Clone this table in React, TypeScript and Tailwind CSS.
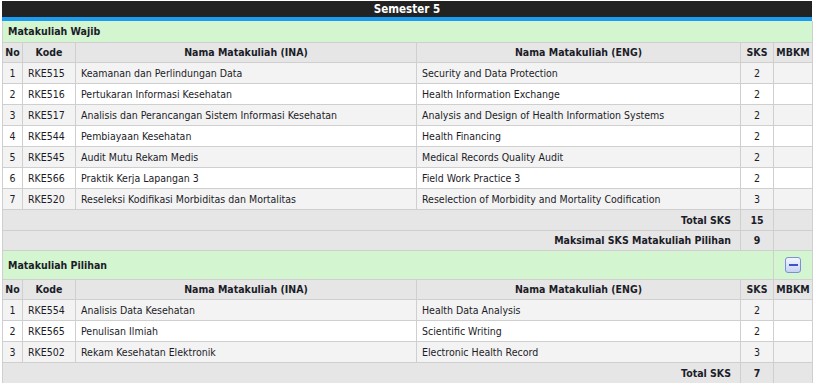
import React from 'react';

type Course = { kode: string; ina: string; eng: string; sks: number };

const wajib: Course[] = [
  { kode: 'RKE515', ina: 'Keamanan dan Perlindungan Data', eng: 'Security and Data Protection', sks: 2 },
  { kode: 'RKE516', ina: 'Pertukaran Informasi Kesehatan', eng: 'Health Information Exchange', sks: 2 },
  { kode: 'RKE517', ina: 'Analisis dan Perancangan Sistem Informasi Kesehatan', eng: 'Analysis and Design of Health Information Systems', sks: 2 },
  { kode: 'RKE544', ina: 'Pembiayaan Kesehatan', eng: 'Health Financing', sks: 2 },
  { kode: 'RKE545', ina: 'Audit Mutu Rekam Medis', eng: 'Medical Records Quality Audit', sks: 2 },
  { kode: 'RKE566', ina: 'Praktik Kerja Lapangan 3', eng: 'Field Work Practice 3', sks: 2 },
  { kode: 'RKE520', ina: 'Reseleksi Kodifikasi Morbiditas dan Mortalitas', eng: 'Reselection of Morbidity and Mortality Codification', sks: 3 },
];

const pilihan: Course[] = [
  { kode: 'RKE554', ina: 'Analisis Data Kesehatan', eng: 'Health Data Analysis', sks: 2 },
  { kode: 'RKE565', ina: 'Penulisan Ilmiah', eng: 'Scientific Writing', sks: 2 },
  { kode: 'RKE502', ina: 'Rekam Kesehatan Elektronik', eng: 'Electronic Health Record', sks: 3 },
];

const cell = 'border border-[#cfcfcf] px-[5px] pt-[2px] pb-0';

function HeaderRow() {
  return (
    <tr className="h-[20px] bg-[#e6e6e6] font-bold">
      <td className={`${cell} !px-0 text-center`}>No</td>
      <td className={`${cell} text-center`}>Kode</td>
      <td className={`${cell} text-center`}>Nama Matakuliah (INA)</td>
      <td className={`${cell} text-center`}>Nama Matakuliah (ENG)</td>
      <td className={`${cell} !px-0 text-center`}>SKS</td>
      <td className={`${cell} !px-0 text-center`}>MBKM</td>
    </tr>
  );
}

function CourseRows({ items }: { items: Course[] }) {
  return (
    <>
      {items.map((c, i) => (
        <tr key={c.kode} className={`h-[21px] ${i % 2 === 0 ? 'bg-[#f3f3f3]' : 'bg-white'}`}>
          <td className={`${cell} !px-0 text-center`}>{i + 1}</td>
          <td className={cell}>{c.kode}</td>
          <td className={cell}>{c.ina}</td>
          <td className={cell}>{c.eng}</td>
          <td className={`${cell} text-center`}>{c.sks}</td>
          <td className={cell}></td>
        </tr>
      ))}
    </>
  );
}

function SummaryRow({ label, value, h = 'h-[21px]' }: { label: string; value: number; h?: string }) {
  return (
    <tr className={`${h} bg-[#e6e6e6] font-bold`}>
      <td colSpan={4} className={`${cell} text-right !pr-[9px]`}>{label}</td>
      <td className={`${cell} text-center`}>{value}</td>
      <td className={cell}></td>
    </tr>
  );
}

export default function App() {
  return (
    <div className="bg-white min-h-[383px] pt-[1px] pl-[2px]">
      <div
        className="w-[810px] text-[10.5px] text-[#1c1c28]"
        style={{ fontFamily: '"DejaVu Sans Condensed", "DejaVu Sans", sans-serif' }}
      >
        <div className="h-[20px] bg-[#222222] border-b-[4px] border-[#1c9cf0] text-white font-bold text-[11.5px] text-center leading-[17px]">
          Semester 5
        </div>
        <table className="w-full border-collapse table-fixed">
          <colgroup>
            <col className="w-[20px]" />
            <col className="w-[53px]" />
            <col className="w-[341px]" />
            <col className="w-[324px]" />
            <col className="w-[33px]" />
            <col className="w-[39px]" />
          </colgroup>
          <tbody>
            <tr className="h-[21px] bg-[#d3f5d0] font-bold">
              <td colSpan={6} className={`${cell} !border-t-0`}>Matakuliah Wajib</td>
            </tr>
            <HeaderRow />
            <CourseRows items={wajib} />
            <SummaryRow label="Total SKS" value={15} />
            <SummaryRow label="Maksimal SKS Matakuliah Pilihan" value={9} h="h-[20px]" />
            <tr className="h-[29px] bg-[#d3f5d0] font-bold">
              <td colSpan={5} className={cell}>Matakuliah Pilihan</td>
              <td className="border border-[#cfcfcf] text-center">
                <button className="inline-flex items-center justify-center w-[16px] h-[16px] rounded-[3px] border border-[#7b8fd6] bg-gradient-to-b from-[#f4f6ff] to-[#c9d2f5] align-middle">
                  <span className="block w-[9px] h-[2px] bg-[#3b55c9]" />
                </button>
              </td>
            </tr>
            <HeaderRow />
            <CourseRows items={pilihan} />
            <SummaryRow label="Total SKS" value={7} />
          </tbody>
        </table>
      </div>
    </div>
  );
}
